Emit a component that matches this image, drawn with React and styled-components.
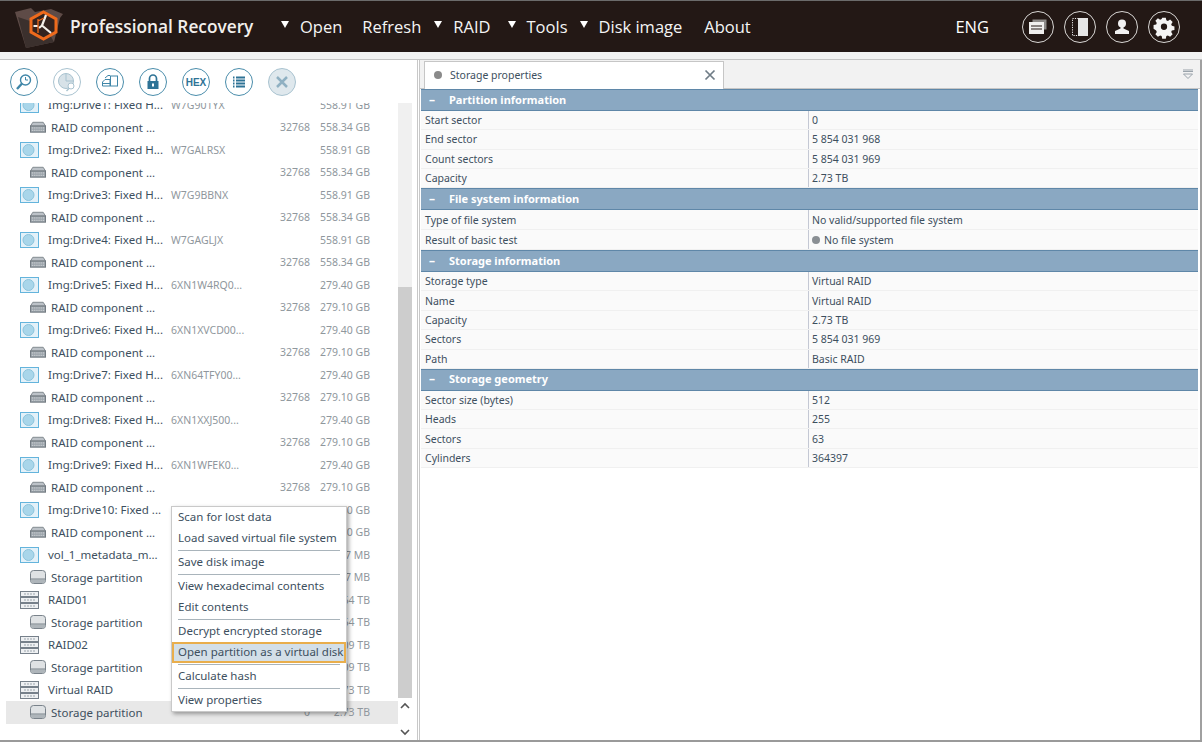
import React from 'react'
import styled, { createGlobalStyle } from 'styled-components'

const GlobalStyle = createGlobalStyle`
  html, body { margin: 0; padding: 0; background: #fff; }
  body { font-family: "Noto Sans", "Open Sans", sans-serif; }
`

const Page = styled.div`
  width: 1202px;
  height: 742px;
  display: flex;
  flex-direction: column;
  overflow: hidden;
  background: #fff;
  border-top: 1px solid #6b6b6b;
  border-bottom: 2px solid #9a9a9a;
  box-sizing: border-box;
`

const Header = styled.header`
  height: 51px;
  flex: none;
  display: flex;
  align-items: center;
  background: #231815;
  color: #fff;
  padding-left: 15px;
  font-family: "Open Sans", "Noto Sans", sans-serif;
`

const Brand = styled.div`
  width: 266px;
  display: flex;
  align-items: center;
  gap: 7px;
  font-size: 17.3px;
  font-weight: 600;
  color: #f2efec;
  white-space: nowrap;
`

const Nav = styled.nav`
  display: flex;
  align-items: center;
  height: 100%;
  font-size: 16.5px;
  color: #f4f4f4;
`

const NavItem = styled.div`
  display: flex;
  align-items: center;
  gap: 11px;
  margin-right: ${p => p.$gap}px;
`

const Arrow = styled.span`
  width: 0;
  height: 0;
  border-left: 4px solid transparent;
  border-right: 4px solid transparent;
  border-top: 7px solid #fff;
  margin-top: -5px;
`

const Lang = styled.div`
  margin-left: auto;
  font-size: 16.5px;
  margin-right: 33px;
  color: #fff;
`

const HeaderIcons = styled.div`
  display: flex;
  gap: 10px;
  margin-right: 22px;
`

const HeaderIcon = styled.div`
  width: 32px;
  height: 32px;
  box-sizing: border-box;
  border: 1.5px solid #d8d6d4;
  border-radius: 50%;
  display: flex;
  align-items: center;
  justify-content: center;
`

const Band = styled.div`
  height: 7px;
  flex: none;
  background: #f2f2f2;
  border-bottom: 1px solid #c4c4c4;
`

const Body = styled.div`
  flex: 1;
  display: flex;
  min-height: 0;
`

const LeftPanel = styled.section`
  width: 418px;
  flex: none;
  display: flex;
  flex-direction: column;
  position: relative;
  border-right: 1px solid #c8c8c8;
  box-sizing: border-box;
`

const Toolbar = styled.div`
  height: 43px;
  flex: none;
  display: flex;
  align-items: center;
  gap: 15px;
  padding: 1px 0 0 10px;
  box-sizing: border-box;
`

const ToolButton = styled.div`
  width: 28px;
  height: 28px;
  box-sizing: border-box;
  border-radius: 50%;
  border: 1.5px solid ${p => (p.$off ? '#a9c3d0' : '#4a8dab')};
  background: ${p => (p.$fill ? '#dfe8ed' : '#fff')};
  display: flex;
  align-items: center;
  justify-content: center;
  font: bold 10px "Liberation Sans", sans-serif;
  color: #2e7396;
`

const TreeArea = styled.div`
  flex: 1;
  display: flex;
  min-height: 0;
`

const Tree = styled.div`
  width: 392px;
  margin-left: 6px;
  overflow: hidden;
`

const TreeInner = styled.div`
  margin-top: -9.5px;
`

const Row = styled.div`
  height: 22.5px;
  display: grid;
  grid-template-columns: 165px 90px 49px 60px;
  align-items: center;
  font-size: 11.5px;
  color: #3d4f5e;
  background: ${p => (p.$selected ? '#e8e8e8' : 'transparent')};
`

const Name = styled.div`
  display: flex;
  align-items: center;
  white-space: nowrap;
  padding-left: ${p => (p.$child ? '24px' : '14px')};
  gap: ${p => (p.$child ? '5px' : '9px')};
`

const Serial = styled.div`
  color: #8f979d;
  font-size: 10.5px;
  white-space: nowrap;
`

const Num = styled.div`
  color: #8f979d;
  font-size: 10.5px;
  text-align: right;
  white-space: nowrap;
`

const Scrollbar = styled.div`
  width: 14px;
  display: flex;
  flex-direction: column;
  align-items: stretch;
  background: #f0f0f0;
`

const ScrollSpacer = styled.div`
  height: 184px;
  flex: none;
`

const ScrollThumb = styled.div`
  flex: 1;
  background: #cdcdcd;
`

const ScrollEnd = styled.div`
  height: 42px;
  flex: none;
  box-sizing: border-box;
  padding: 4px 0 4px;
  background: #fff;
  display: flex;
  flex-direction: column;
  align-items: center;
  justify-content: space-between;
`

const Menu = styled.div`
  position: absolute;
  left: 171px;
  top: 446px;
  width: 176px;
  box-sizing: border-box;
  background: #fff;
  border: 1px solid #c9c9c9;
  box-shadow: 2px 2px 4px rgba(0, 0, 0, 0.35);
  font-size: 11.5px;
  color: #3d4f5e;
`

const MenuItem = styled.div`
  height: 21px;
  line-height: 20px;
  padding-left: 6px;
  white-space: nowrap;
  ${p => p.$active && `
    background: #d3dfe8;
    border: 2px solid #e9ae4c;
    line-height: 16px;
    height: 17px;
    padding-left: 4px;
  `}
`

const MenuRule = styled.div`
  height: 1px;
  margin: 1px 6px;
  background: #a9b4bb;
`

const RightPanel = styled.section`
  flex: 1;
  min-width: 0;
  display: flex;
  flex-direction: column;
  margin-left: 1px;
  border-left: 1px solid #c8c8c8;
  border-right: 2px solid #a0a0a0;
  padding: 0 2px 0 1px;
`

const TabStrip = styled.div`
  height: 28px;
  flex: none;
  position: relative;
  display: flex;
  align-items: flex-end;
  padding-left: 4px;
  background: #f2f2f2;
  border-bottom: 1px solid #c6c6c6;
  margin: 0 -2px 0 -1px;
`

const Tab = styled.div`
  width: 300px;
  height: 28px;
  box-sizing: border-box;
  background: #fff;
  border: 1px solid #c6c6c6;
  border-bottom: none;
  margin-bottom: -1px;
  display: flex;
  align-items: center;
  padding: 0 7px 2px 9px;
  font-size: 10.5px;
  color: #3d4f5e;
`

const TabDot = styled.span`
  width: 8px;
  height: 8px;
  border-radius: 50%;
  background: #8a8a8a;
  margin-right: 8px;
`

const TabClose = styled.span`
  margin-left: auto;
  display: flex;
`

const TabMenu = styled.div`
  position: absolute;
  right: 6px;
  top: 9px;
  display: flex;
`

const SectionHead = styled.div`
  height: 22px;
  box-sizing: border-box;
  display: flex;
  align-items: center;
  padding-bottom: 2px;
  background: #8aa8c2;
  border-top: 1px solid #5f87a8;
  border-bottom: 1px solid #5f87a8;
  color: #fff;
  font-size: 11px;
  font-weight: 700;
`

const Minus = styled.span`
  width: 28px;
  padding-left: 8px;
  box-sizing: border-box;
  font-size: 12px;
`

const PropRow = styled.div`
  height: ${p => p.$h}px;
  display: grid;
  grid-template-columns: 388px 1fr;
  align-items: stretch;
  background: #fafafa;
  border-bottom: 1px solid #f0f0f0;
  box-sizing: border-box;
  font-size: 10.5px;
  color: #3d4f5e;
`

const PropName = styled.div`
  display: flex;
  align-items: center;
  padding-left: 4px;
  border-right: 1px solid #c4c8d4;
`

const PropValue = styled.div`
  display: flex;
  align-items: center;
  gap: 4px;
  padding-left: 3px;
`

const ValueDot = styled.span`
  width: 8px;
  height: 8px;
  border-radius: 50%;
  background: #8a8f94;
`

const Logo = () => (
  <svg width="48" height="46" viewBox="0 0 48 46">
    <path d="M0 8 L16 4 L20 8 L36 5 L48 10 L45 14 L39 38 L11 44 Z" fill="#5e4b47" />
    <path d="M3 13 L11 44 L39 38 L30 22 Z" fill="#3b302d" />
    <polygon points="28.500,8 41,15 41,28 28.500,35 16,28 16,15" fill="#33231f" stroke="#ee6a1c" strokeWidth="3" />
    <path d="M31 11 L27 21.500 L36 29 M27 21.500 L24 24" fill="none" stroke="#f3efe9" strokeWidth="2.200" />
    <path d="M18.500 22 H23" fill="none" stroke="#f3efe9" strokeWidth="2" />
    <path d="M23 15 V29 M23 17 L29 14" fill="none" stroke="#ee6a1c" strokeWidth="1.300" />
  </svg>
)

const DeskIcon = ({ children }) => (
  <svg width="24" height="24" viewBox="0 0 24 24" fill="none">{children}</svg>
)

const headerGlyphs = [
  <DeskIcon key="a">
    <rect x="6.500" y="4.500" width="14" height="10" fill="#8d8a88" />
    <rect x="3" y="7" width="15" height="12" fill="#f0efee" />
    <path d="M5 11 H16 M5 14 H16" stroke="#231815" strokeWidth="1.200" />
  </DeskIcon>,
  <DeskIcon key="b">
    <rect x="4.500" y="3.500" width="7" height="17" stroke="#e8e8e8" strokeDasharray="1.200 1.200" />
    <rect x="10" y="3" width="10" height="18" fill="#e6e6e6" />
  </DeskIcon>,
  <DeskIcon key="c">
    <circle cx="12" cy="8.500" r="4" fill="#f2f2f2" />
    <path d="M10.500 11 h3 v2.500 L19 16 v3 H5 v-3 l5.500-2.500 z" fill="#f2f2f2" />
  </DeskIcon>,
  <DeskIcon key="d">
    <path fill="#f4f4f4" fillRule="evenodd" d="M10 2.500h4l.6 2.900 1.700.7 2.500-1.600 2.800 2.800-1.600 2.500.7 1.700 2.900.6v4l-2.900.6-.7 1.700 1.600 2.500-2.800 2.800-2.500-1.600-1.700.7-.6 2.900h-4l-.6-2.900-1.700-.7-2.500 1.600-2.800-2.800 1.600-2.500-.7-1.700L.4 14.600v-4l2.900-.6.7-1.700-1.600-2.500 2.800-2.800 2.500 1.600 1.700-.7z M12 9a3.500 3.500 0 1 0 0 7a3.500 3.500 0 0 0 0-7z" transform="translate(1.200 .5) scale(.9)" />
  </DeskIcon>,
]

const ToolIcon = ({ children }) => (
  <svg width="20" height="20" viewBox="0 0 20 20" fill="none">{children}</svg>
)

const DriveIcon = () => (
  <svg width="19" height="16" viewBox="0 0 19 16">
    <rect x="0.500" y="0.500" width="18" height="15" fill="#e3f1f9" stroke="#64b4dc" />
    <circle cx="8.500" cy="8" r="5.500" fill="#a9d6ea" stroke="#8cc4dc" />
  </svg>
)

const ComponentIcon = () => (
  <svg width="16" height="12" viewBox="0 0 17 12">
    <path d="M3 1 H14 L16.500 5 H0.500 Z" fill="#bcc2c8" stroke="#7d858c" />
    <rect x="0.500" y="5" width="16" height="6.500" fill="#9aa2a9" stroke="#6f777e" />
    <path d="M2 7 H15 M2 9.500 H15" stroke="#e6e9eb" strokeDasharray="1 1" />
  </svg>
)

const PartitionIcon = () => (
  <svg width="16" height="14" viewBox="0 0 16 14">
    <rect x="0.500" y="0.500" width="15" height="13" rx="3" fill="#dfe2e4" stroke="#79828a" />
    <path d="M1 9.500 H15 V11 a2 2 0 0 1 -2 2 H3 a2 2 0 0 1 -2 -2 Z" fill="#aeb5ba" />
    <path d="M1 9 H15" stroke="#79828a" />
  </svg>
)

const RaidIcon = () => (
  <svg width="19" height="18" viewBox="0 0 19 18">
    {[0, 6, 12].map(y => (
      <g key={y}>
        <rect x="0.500" y={y + 0.5} width="18" height="5" fill="#eef0f2" stroke="#76808a" />
        <path d={`M4 ${y + 3} H15`} stroke="#9aa3ab" strokeDasharray="2 1" />
      </g>
    ))}
  </svg>
)

const icons = { drive: DriveIcon, comp: ComponentIcon, part: PartitionIcon, raid: RaidIcon }

const drives = [
  ['Img:Drive1: Fixed H...', 'W7G901YX', '558.91 GB', '558.34 GB'],
  ['Img:Drive2: Fixed H...', 'W7GALRSX', '558.91 GB', '558.34 GB'],
  ['Img:Drive3: Fixed H...', 'W7G9BBNX', '558.91 GB', '558.34 GB'],
  ['Img:Drive4: Fixed H...', 'W7GAGLJX', '558.91 GB', '558.34 GB'],
  ['Img:Drive5: Fixed H...', '6XN1W4RQ0...', '279.40 GB', '279.10 GB'],
  ['Img:Drive6: Fixed H...', '6XN1XVCD00...', '279.40 GB', '279.10 GB'],
  ['Img:Drive7: Fixed H...', '6XN64TFY00...', '279.40 GB', '279.10 GB'],
  ['Img:Drive8: Fixed H...', '6XN1XXJ500...', '279.40 GB', '279.10 GB'],
  ['Img:Drive9: Fixed H...', '6XN1WFEK0...', '279.40 GB', '279.10 GB'],
  ['Img:Drive10: Fixed ...', '', '279.40 GB', '279.10 GB'],
]

const treeRows = [
  ...drives.flatMap(([name, serial, size, compSize]) => [
    { icon: 'drive', name, serial, size },
    { icon: 'comp', name: 'RAID component ...', count: '32768', size: compSize, child: true },
  ]),
  { icon: 'drive', name: 'vol_1_metadata_m...', size: '511.87 MB' },
  { icon: 'part', name: 'Storage partition', size: '511.87 MB', child: true },
  { icon: 'raid', name: 'RAID01', size: '1.64 TB' },
  { icon: 'part', name: 'Storage partition', size: '1.64 TB', child: true },
  { icon: 'raid', name: 'RAID02', size: '1.09 TB' },
  { icon: 'part', name: 'Storage partition', size: '1.09 TB', child: true },
  { icon: 'raid', name: 'Virtual RAID', size: '2.73 TB' },
  { icon: 'part', name: 'Storage partition', count: '0', size: '2.73 TB', child: true, selected: true },
]

const menuGroups = [
  ['Scan for lost data', 'Load saved virtual file system'],
  ['Save disk image'],
  ['View hexadecimal contents', 'Edit contents'],
  ['Decrypt encrypted storage', 'Open partition as a virtual disk'],
  ['Calculate hash'],
  ['View properties'],
]

const sections = [
  {
    title: 'Partition information',
    rowHeight: 19.25,
    rows: [
      ['Start sector', '0'],
      ['End sector', '5 854 031 968'],
      ['Count sectors', '5 854 031 969'],
      ['Capacity', '2.73 TB'],
    ],
  },
  {
    title: 'File system information',
    rowHeight: 20,
    rows: [
      ['Type of file system', 'No valid/supported file system'],
      ['Result of basic test', 'No file system', true],
    ],
  },
  {
    title: 'Storage information',
    rowHeight: 19.4,
    rows: [
      ['Storage type', 'Virtual RAID'],
      ['Name', 'Virtual RAID'],
      ['Capacity', '2.73 TB'],
      ['Sectors', '5 854 031 969'],
      ['Path', 'Basic RAID'],
    ],
  },
  {
    title: 'Storage geometry',
    rowHeight: 19.25,
    rows: [
      ['Sector size (bytes)', '512'],
      ['Heads', '255'],
      ['Sectors', '63'],
      ['Cylinders', '364397'],
    ],
  },
]

const toolButtons = [
  <ToolButton key="scan">
    <ToolIcon>
      <circle cx="11.500" cy="8" r="5" stroke="#3f86a8" strokeWidth="1.400" />
      <path d="M11.500 5 V8 H14" stroke="#3f86a8" />
      <path d="M8 11.500 L3 17" stroke="#3f86a8" strokeWidth="2.400" />
    </ToolIcon>
  </ToolButton>,
  <ToolButton key="load" $off>
    <ToolIcon>
      <circle cx="9" cy="9" r="7.500" fill="#d7e2e8" stroke="#a9c3d0" />
      <path d="M9 1.500 V9 H16.500" stroke="#a9c3d0" />
      <circle cx="14" cy="14" r="3" fill="#fff" stroke="#a9c3d0" />
      <path d="M12 16.500 L9.500 19" stroke="#a9c3d0" strokeWidth="1.500" />
    </ToolIcon>
  </ToolButton>,
  <ToolButton key="save">
    <ToolIcon>
      <rect x="10.500" y="4" width="7" height="10" fill="#fff" stroke="#3f86a8" />
      <path d="M2.500 10 L5 7.500 H10 V14 H2.500 Z M2.500 11.500 H10" stroke="#3f86a8" fill="#fff" />
      <path d="M5 6 L8 3.500 H10" stroke="#3f86a8" />
    </ToolIcon>
  </ToolButton>,
  <ToolButton key="lock">
    <ToolIcon>
      <path d="M6.500 9 V6.500 a3.500 3.500 0 0 1 7 0 V9" stroke="#2e7396" strokeWidth="1.700" />
      <rect x="4.500" y="9" width="11" height="8" fill="#2e7396" />
      <rect x="9" y="11.500" width="2" height="3" fill="#fff" />
    </ToolIcon>
  </ToolButton>,
  <ToolButton key="hex">HEX</ToolButton>,
  <ToolButton key="list">
    <ToolIcon>
      <path d="M4 5.500 H5.500 M4 8.500 H5.500 M4 11.500 H5.500 M4 14.500 H5.500" stroke="#2e7396" strokeWidth="2" />
      <path d="M7 5.500 H16 M7 8.500 H16 M7 11.500 H16 M7 14.500 H16" stroke="#2e7396" strokeWidth="2" />
    </ToolIcon>
  </ToolButton>,
  <ToolButton key="close" $off $fill>
    <ToolIcon>
      <path d="M5 5 L15 15 M15 5 L5 15" stroke="#8fb0c2" strokeWidth="2.500" />
    </ToolIcon>
  </ToolButton>,
]

const Chevron = ({ up }) => (
  <svg width="10" height="7" viewBox="0 0 10 7" fill="none">
    <path d={up ? 'M1 6 L5 2 L9 6' : 'M1 1 L5 5 L9 1'} stroke="#555" strokeWidth="1.600" />
  </svg>
)

const App = () => (
  <Page>
    <GlobalStyle />
    <Header>
      <Brand>
        <Logo />
        Professional Recovery
      </Brand>
      <Nav>
        <NavItem $gap={20}><Arrow />Open</NavItem>
        <NavItem $gap={13}>Refresh</NavItem>
        <NavItem $gap={17}><Arrow />RAID</NavItem>
        <NavItem $gap={12}><Arrow />Tools</NavItem>
        <NavItem $gap={22}><Arrow />Disk image</NavItem>
        <NavItem $gap={0}>About</NavItem>
      </Nav>
      <Lang>ENG</Lang>
      <HeaderIcons>
        {headerGlyphs.map((glyph, i) => <HeaderIcon key={i}>{glyph}</HeaderIcon>)}
      </HeaderIcons>
    </Header>
    <Band />
    <Body>
      <LeftPanel>
        <Toolbar>{toolButtons}</Toolbar>
        <TreeArea>
          <Tree>
            <TreeInner>
              {treeRows.map(({ icon, name, serial, count, size, child, selected }, i) => {
                const Icon = icons[icon]
                return (
                  <Row key={i} $selected={selected}>
                    <Name $child={child}><Icon />{name}</Name>
                    <Serial>{serial}</Serial>
                    <Num>{count}</Num>
                    <Num>{size}</Num>
                  </Row>
                )
              })}
            </TreeInner>
          </Tree>
          <Scrollbar>
            <ScrollSpacer />
            <ScrollThumb />
            <ScrollEnd>
              <Chevron up />
              <Chevron />
            </ScrollEnd>
          </Scrollbar>
        </TreeArea>
        <Menu>
          {menuGroups.map((group, g) => (
            <React.Fragment key={g}>
              {g > 0 && <MenuRule />}
              {group.map(label => (
                <MenuItem key={label} $active={label.startsWith('Open')}>{label}</MenuItem>
              ))}
            </React.Fragment>
          ))}
        </Menu>
      </LeftPanel>
      <RightPanel>
        <TabStrip>
          <Tab>
            <TabDot />
            Storage properties
            <TabClose>
              <svg width="12" height="12" viewBox="0 0 12 12" fill="none">
                <path d="M1.500 1.500 L10.500 10.500 M10.500 1.500 L1.500 10.500" stroke="#6f7c86" strokeWidth="1.700" />
              </svg>
            </TabClose>
          </Tab>
          <TabMenu>
            <svg width="12" height="11" viewBox="0 0 12 11" fill="none">
              <path d="M1 1 H11 M1 2.500 H11" stroke="#9aa3ab" />
              <path d="M1.500 5 H10.500 L6 9.500 Z" stroke="#9aa3ab" />
            </svg>
          </TabMenu>
        </TabStrip>
        {sections.map(({ title, rowHeight, rows }) => (
          <div key={title}>
            <SectionHead><Minus>–</Minus>{title}</SectionHead>
            {rows.map(([label, value, dot]) => (
              <PropRow key={label} $h={rowHeight}>
                <PropName>{label}</PropName>
                <PropValue>{dot && <ValueDot />}{value}</PropValue>
              </PropRow>
            ))}
          </div>
        ))}
      </RightPanel>
    </Body>
  </Page>
)

export default App
